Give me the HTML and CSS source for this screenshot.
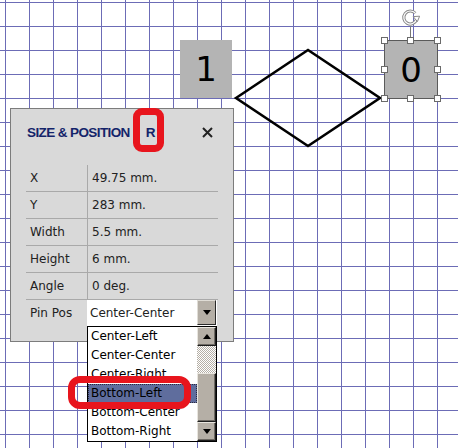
FILE: index.html
```html
<!DOCTYPE html>
<html>
<head>
<meta charset="utf-8">
<link rel="stylesheet" href="styles.css">
</head>
<body>
<div class="canvas">
  <div class="shape box-one">1</div>
  <svg class="diamond" width="156" height="108" viewBox="0 0 156 108">
    <polygon points="6,54 78,6 150,54 78,102" fill="none" stroke="#000" stroke-width="2.6" stroke-linejoin="miter"/>
  </svg>
  <div class="shape box-zero">0</div>
  <div class="rot-line"></div>
  <svg class="rot-icon" width="20" height="20" viewBox="0 0 20 20">
    <path d="M15.5 11.5 A6.5 6.5 0 1 1 14.2 5.2" fill="none" stroke="#8a8a8a" stroke-width="3.2"/>
    <path d="M15.5 11.5 A6.5 6.5 0 1 1 14.2 5.2" fill="none" stroke="#fff" stroke-width="1.2"/>
    <polygon points="12.2,8.6 18.6,8.2 16.4,13.6" fill="#fff" stroke="#8a8a8a" stroke-width="1"/>
  </svg>
  <span class="handle h1"></span><span class="handle h2"></span><span class="handle h3"></span>
  <span class="handle h4"></span><span class="handle h5"></span>
  <span class="handle h6"></span><span class="handle h7"></span><span class="handle h8"></span>

  <div class="panel">
    <div class="panel-head">
      <span class="title">SIZE &amp; POSITION</span>
      <span class="title r">R</span>
      <svg class="close" width="11" height="11" viewBox="0 0 11 11">
        <path d="M1 1 L10 10 M10 1 L1 10" stroke="#222" stroke-width="2"/>
      </svg>
    </div>
    <div class="table">
      <div class="row"><span class="lab">X</span><span class="val">49.75 mm.</span></div>
      <div class="row"><span class="lab">Y</span><span class="val">283 mm.</span></div>
      <div class="row"><span class="lab">Width</span><span class="val">5.5 mm.</span></div>
      <div class="row"><span class="lab">Height</span><span class="val">6 mm.</span></div>
      <div class="row"><span class="lab">Angle</span><span class="val">0 deg.</span></div>
      <div class="row last"><span class="lab">Pin Pos</span>
        <div class="select">
          <span class="sel-text">Center-Center</span>
          <span class="sel-btn"><span class="tri-down"></span></span>
          <div class="list">
            <div class="items">
              <div class="item">Center-Left</div>
              <div class="item">Center-Center</div>
              <div class="item">Center-Right</div>
              <div class="item active">Bottom-Left</div>
              <div class="item">Bottom-Center</div>
              <div class="item">Bottom-Right</div>
            </div>
            <div class="scrollbar">
              <span class="sb-btn"><span class="tri-up"></span></span>
              <span class="sb-track"></span>
              <span class="sb-thumb"></span>
              <span class="sb-btn"><span class="tri-down"></span></span>
            </div>
          </div>
        </div>
      </div>
    </div>
  </div>

  <div class="mark mark-r"></div>
  <div class="mark mark-item"></div>
</div>
</body>
</html>
```
FILE: styles.css
```css
html, body {
  margin: 0;
  padding: 0;
}
body {
  font-family: "DejaVu Sans", sans-serif;
}
.canvas {
  position: relative;
  width: 458px;
  height: 448px;
  overflow: hidden;
  background-color: #fff;
  background-image:
    linear-gradient(to right, #6c6cb6 1px, transparent 1px),
    linear-gradient(to bottom, #6c6cb6 1px, transparent 1px);
  background-size: 24px 24px;
  background-position: 5px 2px;
}
.shape {
  position: absolute;
  background: #b4b4b4;
  color: #000;
  font-family: "DejaVu Sans", sans-serif;
  font-size: 34px;
  display: flex;
  align-items: center;
  justify-content: center;
  box-sizing: border-box;
}
.box-one {
  left: 180px;
  top: 40px;
  width: 52px;
  height: 58px;
}
.box-zero {
  left: 384px;
  top: 40px;
  width: 54px;
  height: 59px;
  border: 1px solid #5a5a5a;
}
.diamond {
  position: absolute;
  left: 230px;
  top: 44px;
}
.rot-line {
  position: absolute;
  left: 410px;
  top: 26px;
  width: 1px;
  height: 12px;
  background: #777;
}
.rot-icon {
  position: absolute;
  left: 401px;
  top: 8px;
}
.handle {
  position: absolute;
  width: 5px;
  height: 5px;
  background: #fff;
  border: 1px solid #6a6a6a;
}
.h1 { left: 381px; top: 37px; }
.h2 { left: 407px; top: 37px; }
.h3 { left: 434px; top: 37px; }
.h4 { left: 381px; top: 66px; }
.h5 { left: 434px; top: 66px; }
.h6 { left: 381px; top: 95px; }
.h7 { left: 407px; top: 95px; }
.h8 { left: 434px; top: 95px; }

.panel {
  position: absolute;
  left: 10px;
  top: 108px;
  width: 224px;
  height: 234px;
  box-sizing: border-box;
  background: #d9d9d9;
  border: 1px solid #7c7c7c;
  padding: 0 15px 15px 15px;
}
.panel-head {
  height: 46px;
  display: flex;
  align-items: center;
  padding-left: 1px;
  margin-bottom: 10px;
}
.title {
  font-family: "Liberation Sans", Arial, sans-serif;
  font-weight: bold;
  font-size: 13.5px;
  letter-spacing: -0.6px;
  color: #14246a;
}
.title.r {
  margin-left: 16px;
}
.close {
  margin-left: auto;
  margin-right: 5px;
}
.table {
  font-size: 12px;
  color: #222;
}
.row {
  display: grid;
  grid-template-columns: 61px 1fr;
  height: 26px;
  border-bottom: 1px solid #a9a9a9;
  line-height: 26px;
}
.row.last {
  border-bottom: none;
}
.lab {
  padding-left: 4px;
}
.val {
  border-left: 1px solid #a9a9a9;
  padding-left: 4px;
}
.select {
  position: relative;
  width: 130px;
  height: 26px;
  background: #fff;
  box-sizing: border-box;
}
.sel-text {
  padding-left: 3px;
}
.sel-btn {
  position: absolute;
  right: 1px;
  top: 0;
  width: 19px;
  height: 25px;
  box-sizing: border-box;
  background: #b5afa6;
  border: 1px solid;
  border-color: #e0ddd6 #2a2a2a #2a2a2a #e0ddd6;
  display: flex;
  align-items: center;
  justify-content: center;
}
.tri-down {
  width: 0;
  height: 0;
  border-left: 4px solid transparent;
  border-right: 4px solid transparent;
  border-top: 5px solid #000;
}
.tri-up {
  width: 0;
  height: 0;
  border-left: 4px solid transparent;
  border-right: 4px solid transparent;
  border-bottom: 5px solid #000;
}
.list {
  position: absolute;
  left: 0;
  top: 26px;
  width: 130px;
  box-sizing: border-box;
  border: 1px solid #000;
  background: #fff;
  display: flex;
  z-index: 2;
}
.items {
  flex: 1;
}
.item {
  height: 19px;
  line-height: 19px;
  padding-left: 2px;
  font-size: 12px;
  color: #000;
  white-space: nowrap;
  border: 1px solid transparent;
  border-width: 0 1px;
}
.item.active {
  background: #5f6d9d;
  outline: 1px dotted #2a2a40;
  outline-offset: -1px;
}
.scrollbar {
  width: 19px;
  display: flex;
  flex-direction: column;
}
.sb-btn {
  height: 19px;
  box-sizing: border-box;
  background: #b5afa6;
  border: 1px solid;
  border-color: #e8e5de #1e1e1e #1e1e1e #e8e5de;
  box-shadow: inset -1px -1px #6e6a64;
  display: flex;
  align-items: center;
  justify-content: center;
}
.sb-track {
  height: 27px;
  background: repeating-conic-gradient(#b5afa6 0 25%, #fff 0 50%) 0 0 / 2px 2px;
}
.sb-thumb {
  height: 49px;
  box-sizing: border-box;
  background: #b5afa6;
  border: 1px solid;
  border-color: #e8e5de #1e1e1e #1e1e1e #e8e5de;
  box-shadow: inset -1px -1px #6e6a64;
}
.mark {
  position: absolute;
  box-sizing: border-box;
  border: 7px solid #e8151d;
  z-index: 5;
}
.mark-r {
  left: 133px;
  top: 108px;
  width: 31px;
  height: 44px;
  border-radius: 9px;
}
.mark-item {
  left: 68px;
  top: 376px;
  width: 123px;
  height: 33px;
  border-radius: 12px;
}
```
